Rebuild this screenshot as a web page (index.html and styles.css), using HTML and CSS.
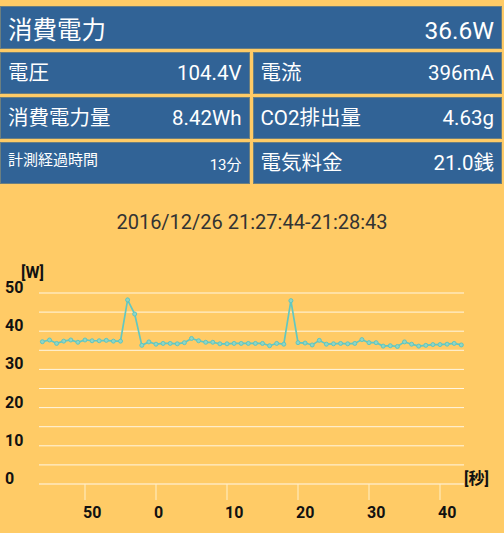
FILE: index.html
```html
<!DOCTYPE html>
<html lang="ja">
<head>
  <meta charset="UTF-8" />
  <meta name="viewport" content="width=device-width, initial-scale=1.0"/>
  <title>消費電力モニター</title>
  <link rel="stylesheet" href="styles.css">
</head>
<body>

<section class="panel">
  <div class="tile wide">
    <span class="label big">消費電力</span>
    <span class="value big">36.6W</span>
  </div>
  <div class="tile">
    <span class="label">電圧</span>
    <span class="value">104.4V</span>
  </div>
  <div class="tile">
    <span class="label">電流</span>
    <span class="value">396mA</span>
  </div>
  <div class="tile">
    <span class="label">消費電力量</span>
    <span class="value">8.42Wh</span>
  </div>
  <div class="tile">
    <span class="label">CO2排出量</span>
    <span class="value">4.63g</span>
  </div>
  <div class="tile split">
    <span class="label small">計測経過時間</span>
    <span class="value small">13分</span>
  </div>
  <div class="tile">
    <span class="label">電気料金</span>
    <span class="value">21.0銭</span>
  </div>
</section>

<div class="period">2016/12/26 21:27:44-21:28:43</div>

<svg class="chart" id="chart" width="504" height="283" viewBox="0 0 504 283"></svg>

<script>
  const watts = [
    37.25, 37.7, 36.8, 37.4, 37.7, 37.1, 37.7, 37.5, 37.5, 37.6,
    37.4, 37.4, 48.2, 44.5, 36.3, 37.2, 36.6, 36.8, 36.8, 36.7,
    37.0, 38.1, 37.5, 37.1, 37.1, 36.7, 36.7, 36.8, 36.8, 36.8,
    36.8, 36.8, 36.2, 36.8, 36.6, 48.0, 37.0, 36.9, 36.4, 37.6,
    36.6, 36.7, 36.8, 36.7, 36.8, 37.8, 37.0, 37.0, 36.1, 36.2,
    36.0, 37.2, 36.6, 36.1, 36.3, 36.5, 36.5, 36.6, 36.8, 36.4
  ];

  const svgNS = 'http://www.w3.org/2000/svg';
  const chart = document.getElementById('chart');

  const left = 39, right = 464, base = 234, perWatt = 3.82;
  const firstX = 42.4, perSec = 7.1;

  function add(tag, attrs, text) {
    const el = document.createElementNS(svgNS, tag);
    for (const k in attrs) el.setAttribute(k, attrs[k]);
    if (text) el.textContent = text;
    chart.appendChild(el);
    return el;
  }

  const yOf = v => base - v * perWatt;

  // grid every 5W, label every 10W
  for (let v = 0; v <= 50; v += 5) {
    const y = yOf(v);
    add('line', { x1: left, x2: right, y1: y, y2: y, class: v === 0 ? 'axis' : 'grid' });
    if (v % 10 === 0) add('text', { x: 5, y: y, class: 'tick-label' }, String(v));
  }
  add('text', { x: 21, y: 28, class: 'unit' }, '[W]');
  add('text', { x: 464, y: 234, class: 'unit' }, '[秒]');

  // seconds ticks: 21:27:50, 21:28:00 ...
  ['50', '0', '10', '20', '30', '40'].forEach((label, i) => {
    const x = firstX + (6 + i * 10) * perSec;
    add('line', { x1: x, x2: x, y1: base, y2: base + 16, class: 'tick' });
    add('text', { x: x - 2, y: 268, class: 'sec-label' }, label);
  });

  const points = watts.map((v, i) => [firstX + i * perSec, yOf(v)]);
  add('polyline', { points: points.map(p => p.join(',')).join(' '), class: 'line' });
  points.forEach(p => add('circle', { cx: p[0], cy: p[1], r: 2, class: 'dot' }));
</script>

</body>
</html>
```

FILE: styles.css
```css
body {
  margin: 0;
  background-color: #ffcb66;
  font-family: Roboto, "Noto Sans CJK JP", sans-serif;
}

.panel {
  display: grid;
  grid-template-columns: 1fr 1fr;
  grid-template-rows: 43px 42px 42px 42px;
  gap: 3px;
  padding: 6px 2px 0 0;
}

.tile {
  display: flex;
  justify-content: space-between;
  align-items: center;
  padding: 0 7px;
  background-color: #316396;
  border: 1px solid #6c7f80;
  color: #fff;
}

.tile.wide {
  grid-column: 1 / 3;
  align-items: flex-end;
  padding-bottom: 3px;
}

.tile.split {
  align-items: stretch;
  padding-top: 8px;
  padding-bottom: 9px;
}

.tile.split .label {
  align-self: flex-start;
}

.tile.split .value {
  align-self: flex-end;
}

.label, .value {
  font-size: 20.5px;
  line-height: 24px;
}

.big {
  font-size: 24.5px;
  line-height: 28px;
}

.small {
  font-size: 15px;
  line-height: 18px;
}

.period {
  margin: 24px 0 14px;
  line-height: 28px;
  text-align: center;
  font-size: 20px;
  color: #333;
}

.chart {
  display: block;
}

.chart .grid {
  stroke: #fff6e2;
  stroke-width: 1;
}

.chart .axis {
  stroke: #fff8ea;
  stroke-width: 1.2;
}

.chart .tick {
  stroke: #fff0c8;
  stroke-width: 1;
}

.chart text {
  font-family: Roboto, "Noto Sans CJK JP", sans-serif;
  font-weight: bold;
  font-size: 16px;
  fill: #111;
}

.chart .line {
  fill: none;
  stroke: #62c8c2;
  stroke-width: 1.7;
}

.chart .dot {
  fill: #8ed6c6;
  stroke: #5fc6c1;
  stroke-width: 1;
}
```
